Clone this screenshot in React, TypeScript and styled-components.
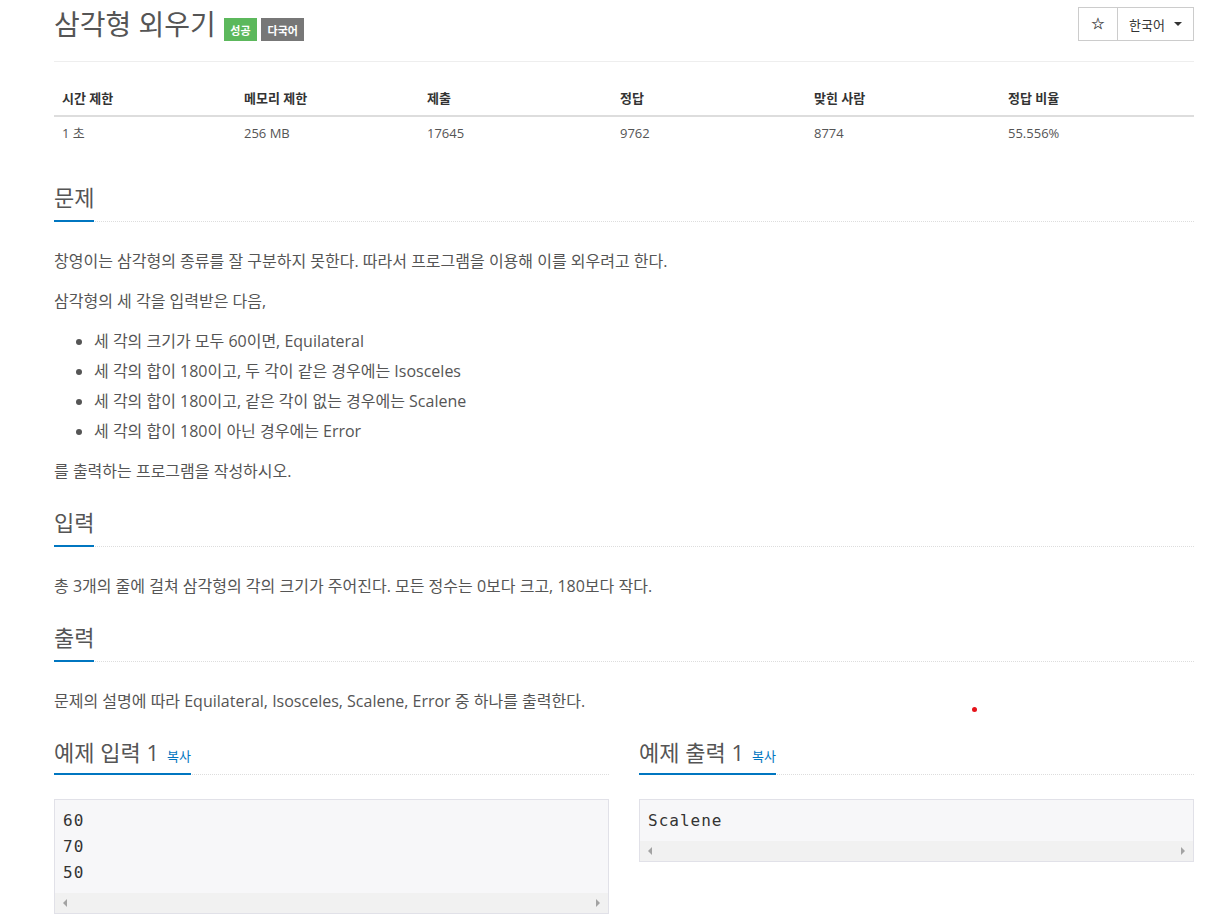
import React from "react";
import styled, { createGlobalStyle } from "styled-components";

const GlobalStyle = createGlobalStyle`
  html, body { margin: 0; padding: 0; background: #fff; }
  body {
    font-family: "Open Sans", "Noto Sans CJK KR", sans-serif;
    font-feature-settings: "palt";
    color: #555;
    font-size: 16px;
  }
  * { box-sizing: border-box; }
`;

const Page = styled.div`
  width: 1140px;
  margin-left: 54px;
  position: relative;
  padding-bottom: 40px;
`;

const Header = styled.header`
  display: flex;
  justify-content: space-between;
  align-items: center;
  padding: 7px 0 20px;
  border-bottom: 1px solid #eee;
`;

const TitleGroup = styled.div`
  display: flex;
  align-items: center;
  gap: 4px;
`;

const Title = styled.h1`
  margin: 0 4px 0 0;
  font-size: 28px;
  font-weight: 400;
  line-height: 34px;
  color: #555;
`;

const Label = styled.span<{ $bg: string }>`
  display: inline-flex;
  align-items: center;
  height: 23px;
  margin-top: 11px;
  padding: 0 6.5px;
  background: ${(p) => p.$bg};
  color: #fff;
  font-size: 11px;
  font-weight: 700;
`;

const ButtonGroup = styled.div`
  display: flex;
`;

const Button = styled.button<{ $w: number }>`
  display: flex;
  align-items: center;
  justify-content: center;
  gap: 9px;
  width: ${(p) => p.$w}px;
  height: 34px;
  margin-left: -1px;
  border: 1px solid #ccc;
  background: #fff;
  color: #333;
  font-family: "Open Sans", "Noto Sans CJK KR", sans-serif;
  font-size: 13px;
  padding: 0;
`;

const Star = styled.span`
  font-family: "DejaVu Sans", sans-serif;
  font-size: 16px;
  line-height: 1;
  color: #333;
  -webkit-text-stroke: 0.2px #333;
`;

const Caret = styled.span`
  display: inline-block;
  width: 0;
  height: 0;
  border-top: 4px solid #333;
  border-left: 4px solid transparent;
  border-right: 4px solid transparent;
`;

const InfoTable = styled.table`
  width: 100%;
  border-collapse: collapse;
  margin: 20px 0 35px;
  font-size: 13px;
  line-height: 17px;
`;

const Th = styled.th`
  text-align: left;
  padding: 8px;
  border-bottom: 2px solid #ddd;
  font-weight: 700;
  color: #333;
`;

const Td = styled.td`
  padding: 8px;
  color: #555;
`;

const Section = styled.section`
  margin-top: 24px;
`;

const HeadlineBar = styled.div`
  display: flex;
  border-bottom: 1px dotted #ddd;
`;

const Headline = styled.h2<{ $pad: number }>`
  margin: 0 0 -1px;
  padding-bottom: ${(p) => p.$pad}px;
  border-bottom: 2px solid #0076c0;
  font-size: 22px;
  font-weight: 400;
  line-height: 24px;
  color: #555;
  display: flex;
  align-items: baseline;
`;

const CopyLink = styled.span`
  margin-left: 8px;
  font-size: 13px;
  line-height: 1;
  color: #0076c0;
`;

const Body = styled.div`
  margin-top: 24px;
  font-size: 16px;
  line-height: 30px;
`;

const P = styled.p`
  margin: 0 0 10px;
`;

const List = styled.ul`
  margin: 0 0 10px;
  padding-left: 40px;
`;

const SampleRow = styled.div`
  display: grid;
  grid-template-columns: 1fr 1fr;
  gap: 30px;
  margin-top: 24px;
`;

const Pre = styled.div`
  margin-top: 24px;
  border: 1px solid #e1e1e8;
  background: #f7f7f9;
`;

const Code = styled.pre`
  margin: 0;
  padding: 8px 8px 7px;
  font-family: "DejaVu Sans Mono", monospace;
  font-size: 16px;
  letter-spacing: 1px;
  line-height: 26px;
  color: #333;
`;

const ScrollBar = styled.div`
  height: 20px;
  background: #f1f1f1;
  display: flex;
  justify-content: space-between;
  align-items: center;
  padding: 0 8px;
`;

const Arrow = styled.span<{ $dir: "left" | "right" }>`
  width: 0;
  height: 0;
  border-top: 4px solid transparent;
  border-bottom: 4px solid transparent;
  ${(p) =>
    p.$dir === "left"
      ? "border-right: 4px solid #a3a3a3;"
      : "border-left: 4px solid #a3a3a3;"}
`;

const Dot = styled.span`
  position: absolute;
  left: 918px;
  top: 707px;
  width: 5px;
  height: 5px;
  border-radius: 50%;
  background: #e5131a;
`;

const stats = [
  ["시간 제한", "1 초", 182],
  ["메모리 제한", "256 MB", 183],
  ["제출", "17645", 193],
  ["정답", "9762", 194],
  ["맞힌 사람", "8774", 194],
  ["정답 비율", "55.556%", 194],
] as const;

function Sample({ title, lines }: { title: string; lines: string[] }) {
  return (
    <div>
      <HeadlineBar>
        <Headline $pad={9}>
          {title}
          <CopyLink>복사</CopyLink>
        </Headline>
      </HeadlineBar>
      <Pre>
        <Code>{lines.join("\n")}</Code>
        <ScrollBar>
          <Arrow $dir="left" />
          <Arrow $dir="right" />
        </ScrollBar>
      </Pre>
    </div>
  );
}

function TextSection({ title, children }: { title: string; children: React.ReactNode }) {
  return (
    <Section>
      <HeadlineBar>
        <Headline $pad={11}>{title}</Headline>
      </HeadlineBar>
      <Body>{children}</Body>
    </Section>
  );
}

export default function App() {
  return (
    <>
      <GlobalStyle />
      <Page>
        <Header>
          <TitleGroup>
            <Title>삼각형 외우기</Title>
            <Label $bg="#5cb85c">성공</Label>
            <Label $bg="#777">다국어</Label>
          </TitleGroup>
          <ButtonGroup>
            <Button $w={40}>
              <Star>☆</Star>
            </Button>
            <Button $w={77}>
              한국어
              <Caret />
            </Button>
          </ButtonGroup>
        </Header>

        <InfoTable>
          <colgroup>
            {stats.map(([h, , w]) => (
              <col key={h} style={{ width: w }} />
            ))}
          </colgroup>
          <thead>
            <tr>
              {stats.map(([h]) => (
                <Th key={h}>{h}</Th>
              ))}
            </tr>
          </thead>
          <tbody>
            <tr>
              {stats.map(([h, v]) => (
                <Td key={h}>{v}</Td>
              ))}
            </tr>
          </tbody>
        </InfoTable>

        <TextSection title="문제">
          <P>창영이는 삼각형의 종류를 잘 구분하지 못한다. 따라서 프로그램을 이용해 이를 외우려고 한다.</P>
          <P>삼각형의 세 각을 입력받은 다음,</P>
          <List>
            <li>세 각의 크기가 모두 60이면, Equilateral</li>
            <li>세 각의 합이 180이고, 두 각이 같은 경우에는 Isosceles</li>
            <li>세 각의 합이 180이고, 같은 각이 없는 경우에는 Scalene</li>
            <li>세 각의 합이 180이 아닌 경우에는 Error</li>
          </List>
          <P>를 출력하는 프로그램을 작성하시오.</P>
        </TextSection>

        <TextSection title="입력">
          <P>총 3개의 줄에 걸쳐 삼각형의 각의 크기가 주어진다. 모든 정수는 0보다 크고, 180보다 작다.</P>
        </TextSection>

        <TextSection title="출력">
          <P>문제의 설명에 따라 Equilateral, Isosceles, Scalene, Error 중 하나를 출력한다.</P>
        </TextSection>

        <SampleRow>
          <Sample title="예제 입력 1" lines={["60", "70", "50"]} />
          <Sample title="예제 출력 1" lines={["Scalene"]} />
        </SampleRow>

        <Dot />
      </Page>
    </>
  );
}
